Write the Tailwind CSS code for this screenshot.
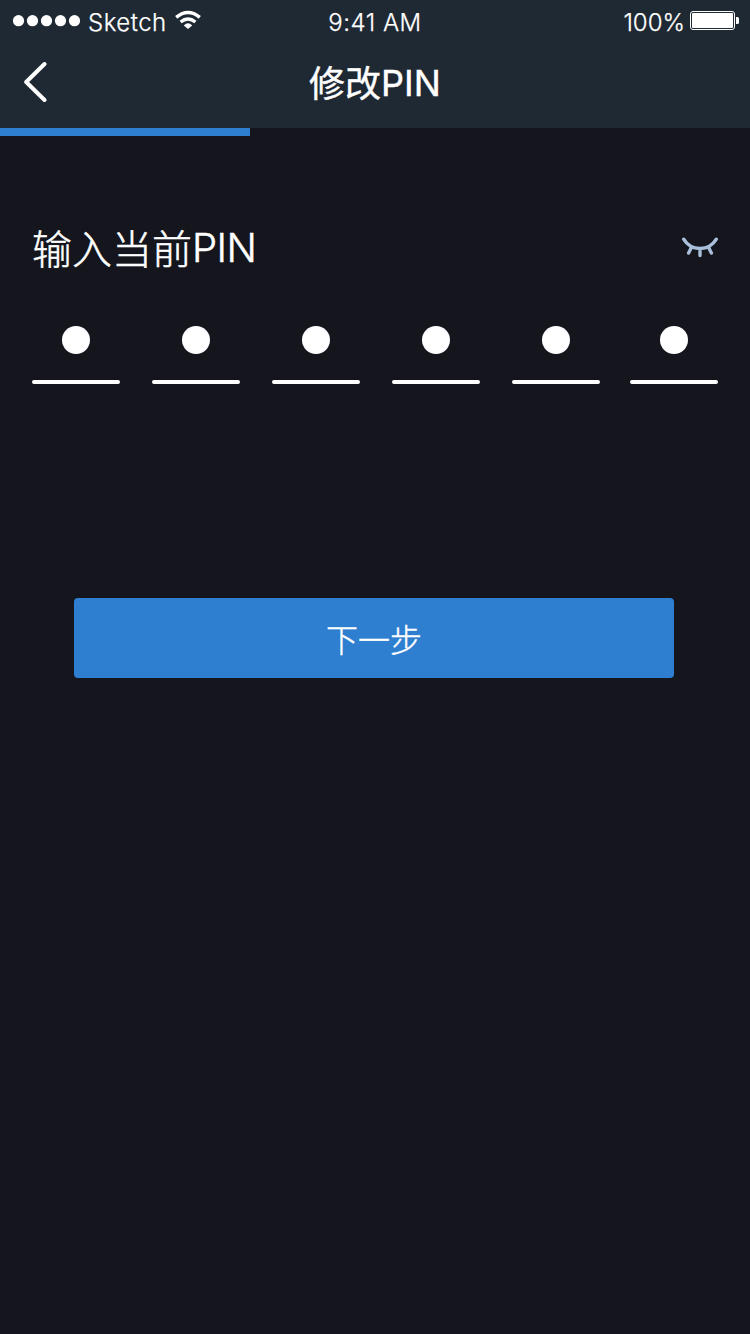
<!DOCTYPE html>
<html lang="zh-CN">
<head>
<meta charset="utf-8">
<meta name="viewport" content="width=750">
<title>修改PIN</title>
<script src="https://cdn.jsdelivr.net/npm/@tailwindcss/browser@4"></script>
</head>
<body class="w-[750px] h-[1334px] overflow-hidden bg-[#14151d] text-white font-['Inter','Noto_Sans_CJK_SC',sans-serif]">
<header class="h-32 bg-[#1f2933]">
  <div class="grid grid-cols-3 h-10 pl-[13px] pr-[11px] text-2xl leading-10 font-light [-webkit-text-stroke:0.25px_white]">
    <div class="flex items-start">
      <svg class="mt-[15px] shrink-0" width="68" height="12" fill="#fff"><circle cx="5.5" cy="5.7" r="5.6"/><circle cx="19.5" cy="5.7" r="5.6"/><circle cx="33.5" cy="5.7" r="5.6"/><circle cx="47.5" cy="5.7" r="5.6"/><circle cx="61.5" cy="5.7" r="5.6"/></svg>
      <span class="ml-[7px] mt-[3px] w-[79px] tracking-[0.5px]">Sketch</span>
      <svg class="mt-[10px] ml-[7px] shrink-0" width="28" height="20" fill="none" stroke="#fff" stroke-width="3.4"><path d="M2.2 7.4Q14 -2.4 25.8 7.4M6.6 12Q14 6 21.4 12"/><path d="M9.8 15.4Q14 11.2 18.2 15.4L14 19Z" fill="#fff" stroke="none"/></svg>
    </div>
    <div class="text-center pt-[3px] pr-[2px] tracking-[0.5px]">9:41 AM</div>
    <div class="flex justify-end items-start">
      <span class="mt-[3px]">100%</span>
      <svg class="ml-[5px] mt-[11px] shrink-0" width="49" height="19" fill="none"><rect x=".5" y=".5" width="44" height="18" rx="2.5" stroke="#fff"/><rect x="2" y="2" width="41" height="15" rx="1" fill="#fff"/><path d="M46 6h1.5q1.5 0 1.5 1.5v4q0 1.5-1.5 1.5H46z" fill="#fff"/></svg>
    </div>
  </div>
  <div class="grid grid-cols-3 h-[88px]">
    <svg class="ml-6 mt-[21px]" width="24" height="42" fill="none" stroke="#fff" stroke-width="4" stroke-linecap="round" stroke-linejoin="round"><path d="M20.5 3L2.2 21L20.5 39"/></svg>
    <h1 class="flex justify-center text-4xl leading-[86px] font-normal [-webkit-text-stroke:0.4px_white]"><span class="pt-px">修改</span><span>PIN</span></h1>
  </div>
</header>
<div class="h-2 w-[250px] bg-[#2e7fd0]"></div>
<main class="px-8">
  <div class="flex justify-between pt-[82px] h-[190px]">
    <h2 class="flex text-[40px] leading-[60px] font-light [-webkit-text-stroke:0.5px_white]"><span class="pt-[2px]">输入当前</span><span class="tracking-[-0.5px]">PIN</span></h2>
    <svg class="mt-[18px]" width="36" height="22" fill="none" stroke="#a9bfda" stroke-width="3.4" stroke-linecap="round"><path d="M1.7 3.2C9 15.6 27 15.6 34.3 3.2M9.5 11.2L6.6 17M18 12.5V19.5M26.5 11.2L29.4 17"/></svg>
  </div>
  <div class="flex">
    <div class="w-[88px] mr-8 flex flex-col items-center gap-[26px]"><i class="size-7 rounded-full bg-white"></i><i class="w-full h-1 rounded-full bg-white"></i></div>
    <div class="w-[88px] mr-8 flex flex-col items-center gap-[26px]"><i class="size-7 rounded-full bg-white"></i><i class="w-full h-1 rounded-full bg-white"></i></div>
    <div class="w-[88px] mr-8 flex flex-col items-center gap-[26px]"><i class="size-7 rounded-full bg-white"></i><i class="w-full h-1 rounded-full bg-white"></i></div>
    <div class="w-[88px] mr-8 flex flex-col items-center gap-[26px]"><i class="size-7 rounded-full bg-white"></i><i class="w-full h-1 rounded-full bg-white"></i></div>
    <div class="w-[88px] mr-[30px] flex flex-col items-center gap-[26px]"><i class="size-7 rounded-full bg-white"></i><i class="w-full h-1 rounded-full bg-white"></i></div>
    <div class="w-[88px] flex flex-col items-center gap-[26px]"><i class="size-7 rounded-full bg-white"></i><i class="w-full h-1 rounded-full bg-white"></i></div>
  </div>
  <button class="block mt-[214px] ml-[42px] w-[600px] h-20 rounded bg-[#2e7fd0] text-[32px] leading-[80px] pt-[3px] font-light [-webkit-text-stroke:0.4px_white]">下一步</button>
</main>
</body>
</html>
